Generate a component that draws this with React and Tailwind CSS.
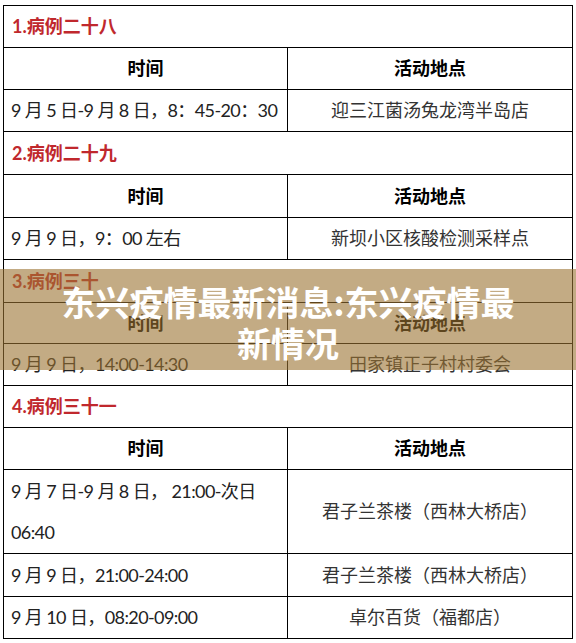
import React from "react";

const FONT = { fontFamily: "Lato, 'Noto Sans CJK SC', sans-serif" };

function TitleRow({ text, h }) {
  return (
    <div className={`flex items-center border-b border-black pl-[8px] ${h}`}>
      <span className="text-[18px] font-bold text-[#c0282d]">{text}</span>
    </div>
  );
}

function HeaderRow({ h }) {
  return (
    <div className={`flex border-b border-black ${h}`}>
      <div className="flex w-[284px] items-center justify-center border-r border-black text-[18px] font-bold text-black">
        时间
      </div>
      <div className="flex flex-1 items-center justify-center text-[18px] font-bold text-black">
        活动地点
      </div>
    </div>
  );
}

function DataRow({ left, right, h, last }) {
  return (
    <div className={`flex ${last ? "" : "border-b border-black"} ${h}`}>
      <div className="flex w-[284px] items-center overflow-hidden border-r border-black pl-[7px] text-[18px] leading-[41px] tracking-[-0.6px] whitespace-nowrap text-[#222]">
        <div>{left}</div>
      </div>
      <div className="flex flex-1 items-center justify-center text-[18px] text-[#333]">
        {right}
      </div>
    </div>
  );
}

export default function App() {
  return (
    <div className="relative h-[643px] w-[576px] overflow-hidden bg-white" style={FONT}>
      <div className="ml-[3px] mt-[5px] w-[570px] border border-black">
        <TitleRow text="1.病例二十八" h="h-[42px]" />
        <HeaderRow h="h-[42px]" />
        <DataRow left="9 月 5 日-9 月 8 日，8：45-20：30" right="迎三江菌汤兔龙湾半岛店" h="h-[42px]" />
        <TitleRow text="2.病例二十九" h="h-[43px]" />
        <HeaderRow h="h-[43px]" />
        <DataRow left="9 月 9 日，9：00 左右" right="新坝小区核酸检测采样点" h="h-[42px]" />
        <TitleRow text="3.病例三十" h="h-[43px]" />
        <HeaderRow h="h-[41px]" />
        <DataRow left="9 月 9 日，14:00-14:30" right="田家镇正子村村委会" h="h-[42px]" />
        <TitleRow text="4.病例三十一" h="h-[42px]" />
        <HeaderRow h="h-[42px]" />
        <DataRow
          left={
            <>
              9 月 7 日-9 月 8 日， 21:00-次日
              <br />
              06:40
            </>
          }
          right="君子兰茶楼（西林大桥店）"
          h="h-[84px]"
        />
        <DataRow left="9 月 9 日，21:00-24:00" right="君子兰茶楼（西林大桥店）" h="h-[43px]" />
        <DataRow left="9 月 10 日，08:20-09:00" right="卓尔百货（福都店）" h="h-[41px]" last />
      </div>

      <div className="absolute left-0 top-[269px] flex h-[101px] w-[576px] items-center justify-center bg-[rgba(155,115,50,0.6)] px-[55px] pt-[4px]">
        <div
          className="text-center text-[34px] font-bold leading-[41px] text-white"
          style={{ fontFamily: "'Noto Sans CJK SC', sans-serif" }}
        >
          东兴疫情最新消息:东兴疫情最新情况
        </div>
      </div>
    </div>
  );
}
